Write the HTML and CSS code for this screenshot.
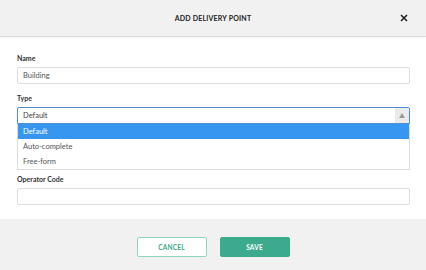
FILE: index.html
```html
<!DOCTYPE html>
<html lang="en">
<head>
    <meta charset="UTF-8">
    <meta name="viewport" content="width=device-width, initial-scale=1.0">
    <title>Add Delivery Point</title>
    <link rel="stylesheet" href="styles.css">
</head>
<body>
    <div class="modal">
        <div class="modal-header">
            <h2>Add Delivery Point</h2>
            <button class="close-btn" aria-label="Close">
                <svg width="8" height="8" viewBox="0 0 8 8"><path d="M1 1L7 7M7 1L1 7" stroke="#222" stroke-width="1.6"/></svg>
            </button>
        </div>

        <div class="modal-body">
            <div class="field">
                <label for="name">Name</label>
                <input type="text" id="name" value="Building">
            </div>

            <div class="field field-type">
                <label>Type</label>
                <div class="select open">
                    <span class="select-value">Default</span>
                    <span class="select-arrow">
                        <svg width="6" height="5" viewBox="0 0 6 5"><path d="M3 0L6 5H0Z" fill="#999"/></svg>
                    </span>
                </div>
                <ul class="options">
                    <li class="selected">Default</li>
                    <li>Auto-complete</li>
                    <li>Free-form</li>
                </ul>
            </div>

            <div class="field">
                <label for="code">Operator Code</label>
                <input type="text" id="code">
            </div>
        </div>

        <div class="modal-footer">
            <button class="btn btn-cancel">Cancel</button>
            <button class="btn btn-save">Save</button>
        </div>
    </div>
</body>
</html>
```

FILE: styles.css
```css
body {
    margin: 0;
    font-family: Lato, "Open Sans", sans-serif;
    color: #333;
    background: #fff;
}
.modal {
    width: 426px;
    height: 270px;
    display: flex;
    flex-direction: column;
}
.modal-header {
    height: 36px;
    background: #f1f1f1;
    border-bottom: 1px solid #dcdcdc;
    box-shadow: 0 1px 2px rgba(0,0,0,0.05);
    display: flex;
    align-items: center;
    justify-content: center;
    position: relative;
}
.modal-header h2 {
    margin: 0;
    font-size: 7px;
    font-weight: 700;
    letter-spacing: 0.2px;
    text-transform: uppercase;
    color: #222;
}
.close-btn {
    position: absolute;
    right: 18px;
    top: 14px;
    background: none;
    border: none;
    padding: 0;
    line-height: 0;
    cursor: pointer;
}
.modal-body {
    padding: 17px 16px 0 17px;
    flex: 1;
}
.field {
    margin-bottom: 10px;
}
.field-type {
    margin-bottom: 5px;
}
label {
    display: block;
    font-size: 7px;
    font-weight: 700;
    color: #333;
    height: 9px;
    line-height: 9px;
    margin-bottom: 4px;
}
input {
    display: block;
    width: 100%;
    height: 17px;
    padding: 0 5px;
    border: 1px solid #dedede;
    border-radius: 2px;
    box-sizing: border-box;
    font-family: inherit;
    font-size: 7.5px;
    color: #555;
}
.select {
    height: 17px;
    border: 1px solid #4a8fd8;
    border-radius: 2px 2px 0 0;
    box-sizing: border-box;
    display: flex;
    align-items: center;
    font-size: 7.5px;
    color: #444;
    box-shadow: 0 1px 0 #4a8fd8;
}
.select-value {
    flex: 1;
    padding-left: 5px;
}
.select-arrow {
    width: 14px;
    height: 15px;
    background: #ebebeb;
    display: flex;
    align-items: center;
    justify-content: center;
}
.options {
    list-style: none;
    margin: 0;
    padding: 0;
    border: 1px solid #dcdcdc;
    border-top: none;
    font-size: 7.5px;
    color: #555;
}
.options li {
    height: 15px;
    line-height: 15px;
    padding-left: 5px;
}
.options li.selected {
    background: #3797f0;
    color: #fff;
}
.modal-footer {
    height: 51px;
    background: #f1f1f1;
    display: flex;
    justify-content: center;
    align-items: flex-start;
    gap: 13px;
    padding-top: 18px;
    box-sizing: border-box;
}
.btn {
    width: 70px;
    height: 20px;
    border-radius: 2px;
    font-family: inherit;
    font-size: 6.5px;
    font-weight: 700;
    text-transform: uppercase;
    letter-spacing: 0.2px;
    cursor: pointer;
}
.btn-cancel {
    background: #fff;
    border: 1px solid #8fd5c2;
    color: #3aa88a;
}
.btn-save {
    background: #3caa8c;
    border: 1px solid #3caa8c;
    color: #fff;
}
```
